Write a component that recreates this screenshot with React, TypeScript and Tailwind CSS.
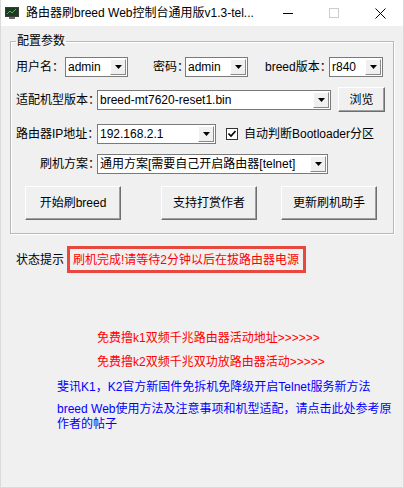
import React from "react";

function Arrow() {
  return (
    <svg width="7" height="4" viewBox="0 0 7 4" aria-hidden="true">
      <polygon points="0,0 7,0 3.5,4" fill="#000" />
    </svg>
  );
}

function Combo({ w, value }: { w: string; value: string }) {
  return (
    <div className={`flex h-[20px] shrink-0 items-stretch border border-[#7a7a7a] bg-white ${w}`}>
      <div className="flex-1 truncate whitespace-nowrap pl-[2px] text-[12px] leading-[18px] text-black">
        {value}
      </div>
      <div className="m-px flex w-[16px] items-center justify-center border border-t-white border-l-white border-r-[#8a8a8a] border-b-[#8a8a8a] bg-[#f0f0f0]">
        <Arrow />
      </div>
    </div>
  );
}

function Btn({ w, h, children, className = "" }: { w: string; h: string; children: React.ReactNode; className?: string }) {
  return (
    <button
      type="button"
      className={`flex shrink-0 items-center justify-center whitespace-nowrap border border-t-white border-l-white border-r-[#6e6e6e] border-b-[#6e6e6e] bg-[#f0f0f0] text-[12px] text-black shadow-[inset_-1px_-1px_0_#a0a0a0] ${w} ${h} ${className}`}
    >
      {children}
    </button>
  );
}

function Label({ w, children, className = "" }: { w: string; children: React.ReactNode; className?: string }) {
  return <span className={`shrink-0 whitespace-nowrap ${w} ${className}`}>{children}</span>;
}

export default function App() {
  return (
    <div className="flex h-[488px] w-[404px] flex-col overflow-hidden border-x border-b border-[#dadada] bg-[#f0f0f0] font-['Liberation_Sans','Noto_Sans_CJK_SC',sans-serif] text-[12px] text-black">
      {/* 标题栏 */}
      <div className="flex h-[26px] shrink-0 items-center bg-white">
        <svg className="ml-[4px]" width="14" height="12" viewBox="0 0 14 12" aria-hidden="true">
          <rect x="0" y="0" width="14" height="10" fill="#3b3f3b" />
          <rect x="1" y="1" width="12" height="8" fill="#1d3a22" />
          <path d="M2 7 L5 4 L7 6 L11 2" stroke="#5fae5f" strokeWidth="1" fill="none" />
          <rect x="4" y="10" width="6" height="2" fill="#6b6b6b" />
        </svg>
        <span className="ml-[7px] whitespace-nowrap leading-[16px]">路由器刷breed Web控制台通用版v1.3-tel...</span>
        <div className="ml-auto flex h-full">
          <div className="flex w-[46px] items-center justify-center">
            <div className="h-px w-[10px] bg-black" />
          </div>
          <div className="flex w-[46px] items-center justify-center">
            <div className="h-[10px] w-[10px] border border-[#cccccc]" />
          </div>
          <div className="flex w-[46px] items-center justify-center">
            <svg width="11" height="11" viewBox="0 0 11 11" aria-hidden="true">
              <path d="M0.5 0.5 L10.5 10.5 M10.5 0.5 L0.5 10.5" stroke="#000" strokeWidth="1" />
            </svg>
          </div>
        </div>
      </div>

      {/* 配置参数 */}
      <fieldset className="mx-[9px] mt-[7px] h-[201px] shrink-0 border border-[#b8b8b8] px-[5px] shadow-[inset_1px_1px_0_#fff,1px_1px_0_#fff]">
        <legend className="px-px text-[12px] leading-[16px]">配置参数</legend>

        <div className="mt-[8px] flex h-[20px] items-center">
          <Label w="w-[49px]">用户名：</Label>
          <Combo w="w-[63px]" value="admin" />
          <Label w="w-[32px]" className="ml-[25px]">密码：</Label>
          <Combo w="w-[63px]" value="admin" />
          <Label w="w-[64px]" className="ml-[17px]">breed版本：</Label>
          <Combo w="w-[54px]" value="r840" />
        </div>

        <div className="mt-[10px] flex h-[25px] items-center">
          <Label w="w-[81px]">适配机型版本：</Label>
          <Combo w="w-[234px]" value="breed-mt7620-reset1.bin" />
          <Btn w="w-[47px]" h="h-[25px]" className="ml-[7px]">
            浏览
          </Btn>
        </div>

        <div className="mt-[12px] flex h-[20px] items-center">
          <Label w="w-[81px]">路由器IP地址：</Label>
          <Combo w="w-[119px]" value="192.168.2.1" />
          <div className="ml-[10px] flex h-[12px] w-[12px] shrink-0 items-center justify-center border border-[#333] bg-white">
            <svg width="8" height="8" viewBox="0 0 8 8" aria-hidden="true">
              <path d="M0.5 3.5 L3 6 L7.5 1" stroke="#000" strokeWidth="1.6" fill="none" />
            </svg>
          </div>
          <Label w="w-auto" className="ml-[6px]">自动判断Bootloader分区</Label>
        </div>

        <div className="mt-[10px] flex h-[20px] items-center pl-[24px]">
          <Label w="w-[57px]">刷机方案：</Label>
          <Combo w="w-[231px]" value="通用方案[需要自己开启路由器[telnet]" />
        </div>

        <div className="mt-[12px] flex h-[34px] items-center">
          <Btn w="w-[96px]" h="h-[34px]" className="ml-[9px]">
            开始刷breed
          </Btn>
          <Btn w="w-[96px]" h="h-[34px]" className="ml-[40px]">
            支持打赏作者
          </Btn>
          <Btn w="w-[96px]" h="h-[34px]" className="ml-[24px]">
            更新刷机助手
          </Btn>
        </div>
      </fieldset>

      {/* 状态提示 */}
      <div className="mt-[12px] flex items-center pl-[15px]">
        <Label w="w-[51px]">状态提示</Label>
        <div className="flex h-[27px] w-[239px] shrink-0 items-center whitespace-nowrap border-[3px] border-[#e8483e] pl-[3px] text-[#ff0000]">
          刷机完成!请等待2分钟以后在拔路由器电源
        </div>
      </div>

      {/* 链接 */}
      <div className="mt-[57px] flex flex-col leading-[16px]">
        <a className="ml-[96px] whitespace-nowrap text-[#ff0000]">免费撸k1双频千兆路由器活动地址&gt;&gt;&gt;&gt;&gt;&gt;</a>
        <a className="ml-[96px] mt-[8px] whitespace-nowrap text-[#ff0000]">免费撸k2双频千兆双功放路由器活动&gt;&gt;&gt;&gt;&gt;</a>
        <a className="ml-[56px] mt-[9px] whitespace-nowrap text-[#0000ff]">斐讯K1，K2官方新固件免拆机免降级开启Telnet服务新方法</a>
        <a className="ml-[56px] mt-[7px] w-[344px] leading-[15px] text-[#0000ff]">
          breed Web使用方法及注意事项和机型适配，请点击此处参考原作者的帖子
        </a>
      </div>
    </div>
  );
}
